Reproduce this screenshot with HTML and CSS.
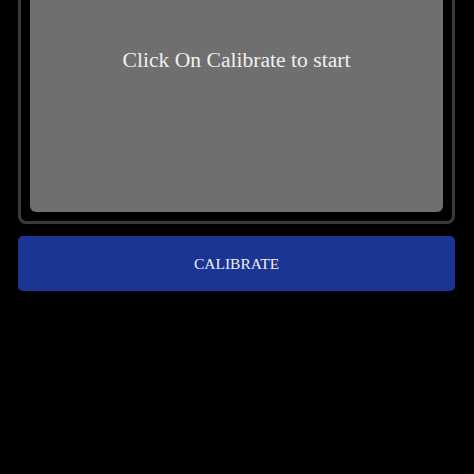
FILE: index.html
```html
<!DOCTYPE html>
<html>
<head>
<meta charset="utf-8">
<link rel="stylesheet" href="styles.css">
</head>
<body>
<div class="page">
  <div class="frame">
    <div class="panel">
      <p class="hint">Click On Calibrate to start</p>
    </div>
  </div>
  <button class="calibrate">CALIBRATE</button>
</div>
</body>
</html>
```
FILE: styles.css
```css
html, body {
  margin: 0;
  padding: 0;
  background: #000;
  height: 100%;
  overflow: hidden;
}
.page {
  padding: 0 19px 0 18px;
  display: flex;
  flex-direction: column;
  gap: 12px;
  font-family: "Liberation Serif", "DejaVu Serif", serif;
}
.frame {
  margin-top: -30px;
  border: 3px solid #3a3a3a;
  border-radius: 8px;
  padding: 9px;
  background: #000;
}
.panel {
  height: 230px;
  box-sizing: border-box;
  background: #6f6f6f;
  border-radius: 6px;
  padding-top: 64px;
}
.hint {
  margin: 0;
  text-align: center;
  color: #f0f0f0;
  font-size: 21.6px;
  line-height: 28px;
}
.calibrate {
  height: 55px;
  border: none;
  border-radius: 5px;
  background: #1a3594;
  color: #eef0f8;
  font-family: "Liberation Serif", "DejaVu Serif", serif;
  font-size: 15.5px;
  padding-top: 2px;
  cursor: pointer;
}
```
